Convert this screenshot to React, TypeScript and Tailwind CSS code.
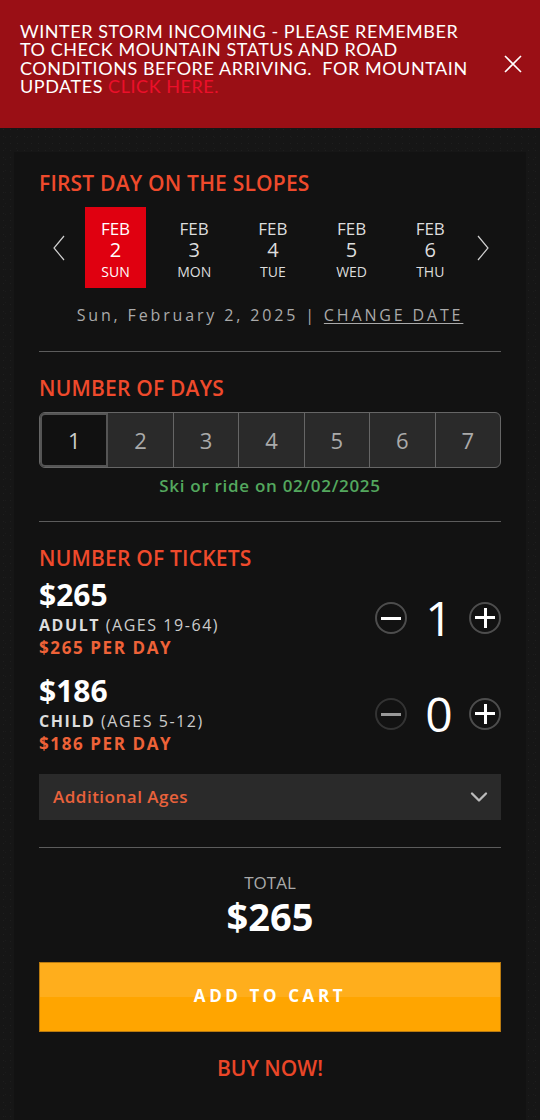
import React from 'react';
import { ChevronDown } from 'lucide-react';

const days = [
  { d: 2, w: 'SUN', active: true },
  { d: 3, w: 'MON' },
  { d: 4, w: 'TUE' },
  { d: 5, w: 'WED' },
  { d: 6, w: 'THU' },
];

const Heading = ({ children }: { children: React.ReactNode }) => (
  <h2 className="text-[21px] leading-[24px] font-semibold text-[#ef4a2c] tracking-[0.2px] whitespace-nowrap">{children}</h2>
);

const Arrow = ({ right }: { right?: boolean }) => (
  <svg viewBox="0 0 12 26" className="w-[12px] h-[26px] text-[#d0d0d0]" fill="none" stroke="currentColor" strokeWidth="1.2">
    <path d={right ? 'M1 1l10 12L1 25' : 'M11 1L1 13l10 12'} />
  </svg>
);

const Stepper = ({ value, dim }: { value: number; dim?: boolean }) => (
  <div className="flex items-center">
    <button className={`w-[32px] h-[32px] rounded-full border-[2px] flex items-center justify-center ${dim ? 'border-[#333]' : 'border-[#4d4d4d]'}`}>
      <span className={`block w-[20px] h-[3px] ${dim ? 'bg-[#999]' : 'bg-white'}`}></span>
    </button>
    <span className="w-[62px] pl-[2px] text-center text-[48px] leading-[48px] text-white">{value}</span>
    <button className="w-[32px] h-[32px] rounded-full border-[2px] border-[#4d4d4d] relative">
      <span className="absolute left-[4px] top-[12px] w-[20px] h-[3px] bg-white"></span>
      <span className="absolute left-[12.5px] top-[4px] w-[3px] h-[20px] bg-white"></span>
    </button>
  </div>
);

const Ticket = ({ price, name, ages, perDay, value, dim }: { price: string; name: string; ages: string; perDay: string; value: number; dim?: boolean }) => (
  <div className="flex items-center justify-between h-[96px]">
    <div>
      <div className="text-[30px] leading-[36px] font-bold text-white">{price}</div>
      <div className="text-[16px] leading-[22px] mt-[1px] text-[#ccc] tracking-[1.55px]">
        <span className="font-bold text-[#ddd]">{name}</span> ({ages})
      </div>
      <div className="text-[17px] leading-[24px] font-bold text-[#ee6238] tracking-[1.6px]">{perDay}</div>
    </div>
    <Stepper value={value} dim={dim} />
  </div>
);

export default function App() {
  return (
    <div className="w-[540px] h-[1120px] overflow-hidden bg-[#161616] bg-[radial-gradient(#1f1f1f_0.6px,transparent_0.8px),radial-gradient(#1c1c1c_0.6px,transparent_0.8px)] bg-[length:7px_7px,11px_11px] font-['Open_Sans',sans-serif]">
      {/* Alert banner */}
      <div className="h-[128px] bg-[#9a0f15] flex items-center pl-[20px] pr-[18px] pb-[11px]">
        <p className="w-[465px] text-[18px] leading-[18.3px] text-white tracking-[0.55px] font-['Lato',sans-serif]">
          WINTER STORM INCOMING - PLEASE REMEMBER TO CHECK MOUNTAIN STATUS AND ROAD CONDITIONS BEFORE ARRIVING.&nbsp; FOR MOUNTAIN UPDATES <span className="text-[#ec0f2a]">CLICK HERE.</span>
        </p>
        <svg viewBox="0 0 18 18" className="w-[18px] h-[18px] ml-auto mb-[-11px] text-white" fill="none" stroke="currentColor" strokeWidth="1.6">
          <path d="M1 1l16 16M17 1L1 17" />
        </svg>
      </div>

      {/* Booking panel */}
      <div className="mx-[14px] mt-[24px] bg-[#121212] px-[25px] h-[968px]">
        <div className="pt-[19px]">
          <Heading>FIRST DAY ON THE SLOPES</Heading>
          <div className="flex items-center mt-[12px]">
            <div className="ml-[14px] w-[32px]"><Arrow /></div>
            <div className="flex gap-[17.7px]">
              {days.map((x) => (
                <div key={x.d} className={`w-[61px] h-[81px] flex flex-col items-center pt-[12px] ${x.active ? 'bg-[#e00010] text-white' : 'text-[#ddd]'}`}>
                  <span className="text-[17px] leading-[20px]">FEB</span>
                  <span className="text-[20px] leading-[21px]">{x.d}</span>
                  <span className="text-[14px] leading-[18px] mt-[3px]">{x.w}</span>
                </div>
              ))}
            </div>
            <div className="ml-[16px]"><Arrow right /></div>
          </div>
          <p className="mt-[15px] text-center text-[16px] leading-[24px] text-[#aaa] tracking-[2.85px] whitespace-nowrap">
            Sun, February 2, 2025 | <span className="underline underline-offset-2">CHANGE DATE</span>
          </p>
          <div className="mt-[24px] h-px bg-[#5c5c5c]"></div>
        </div>

        <div className="mt-[24px]">
          <Heading>NUMBER OF DAYS</Heading>
          <div className="mt-[12px] h-[56px] flex rounded-[6px] border border-[#666] bg-[#2a2a2a] overflow-hidden">
            {[1, 2, 3, 4, 5, 6, 7].map((n) => (
              <div key={n} className={`flex-1 flex items-center justify-center text-[22px] text-[#aaa] ${n === 1 ? 'bg-[#111] border-[2px] border-[#555] rounded-l-[5px] text-[#ccc]' : ''} ${n > 1 && n < 7 ? 'border-r border-[#666]' : ''}`}>
                {n}
              </div>
            ))}
          </div>
          <p className="mt-[7px] text-center text-[17px] leading-[22px] font-semibold text-[#54a85e] tracking-[0.7px]">Ski or ride on 02/02/2025</p>
          <div className="mt-[24px] h-px bg-[#5c5c5c]"></div>
        </div>

        <div className="mt-[24px]">
          <Heading>NUMBER OF TICKETS</Heading>
          <div className="mt-[0px]">
            <Ticket price="$265" name="ADULT" ages="AGES 19-64" perDay="$265 PER DAY" value={1} />
            <Ticket price="$186" name="CHILD" ages="AGES 5-12" perDay="$186 PER DAY" value={0} dim />
          </div>
          <div className="mt-[12px] h-[46px] bg-[#2a2a2a] flex items-center justify-between pl-[14px] pr-[8px]">
            <span className="text-[17px] font-semibold text-[#e9623c] tracking-[0.5px]">Additional Ages</span>
            <ChevronDown className="w-[28px] h-[28px] text-[#bbb]" strokeWidth={2} />
          </div>
          <div className="mt-[27px] h-px bg-[#5c5c5c]"></div>
        </div>

        <div className="mt-[24px] text-center">
          <div className="text-[17px] leading-[22px] text-[#aaa]">TOTAL</div>
          <div className="text-[38px] leading-[44px] font-bold text-white">$265</div>
        </div>

        <button className="mt-[24px] w-full h-[70px] pb-[3px] border border-[#b97a10] bg-[linear-gradient(#ffae1c_0,#ffae1c_50%,#ffa500_50%,#ffa500_100%)] text-white text-[17px] font-bold tracking-[3.6px]">
          ADD TO CART
        </button>
        <div className="mt-[22px] text-center text-[21px] leading-[28px] font-semibold text-[#ea4628]">BUY NOW!</div>
      </div>
    </div>
  );
}
